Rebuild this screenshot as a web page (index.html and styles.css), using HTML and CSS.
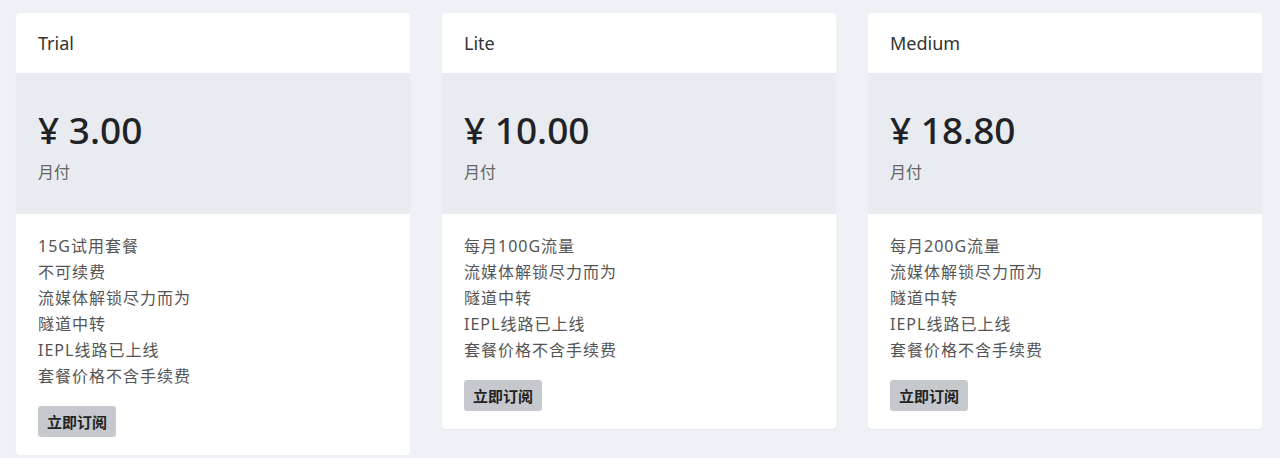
FILE: index.html
```html
<!DOCTYPE html>
<html lang="zh-CN">
<head>
<meta charset="utf-8">
<link rel="stylesheet" href="styles.css">
</head>
<body>
<div class="plans">
  <div class="card">
    <div class="card-head">Trial</div>
    <div class="card-price">
      <div class="price">¥ 3.00</div>
      <div class="period">月付</div>
    </div>
    <div class="card-body">
      <div class="features">
        <div>15G试用套餐</div>
        <div>不可续费</div>
        <div>流媒体解锁尽力而为</div>
        <div>隧道中转</div>
        <div>IEPL线路已上线</div>
        <div>套餐价格不含手续费</div>
      </div>
      <button class="btn">立即订阅</button>
    </div>
  </div>
  <div class="card">
    <div class="card-head">Lite</div>
    <div class="card-price">
      <div class="price">¥ 10.00</div>
      <div class="period">月付</div>
    </div>
    <div class="card-body">
      <div class="features">
        <div>每月100G流量</div>
        <div>流媒体解锁尽力而为</div>
        <div>隧道中转</div>
        <div>IEPL线路已上线</div>
        <div>套餐价格不含手续费</div>
      </div>
      <button class="btn">立即订阅</button>
    </div>
  </div>
  <div class="card">
    <div class="card-head">Medium</div>
    <div class="card-price">
      <div class="price">¥ 18.80</div>
      <div class="period">月付</div>
    </div>
    <div class="card-body">
      <div class="features">
        <div>每月200G流量</div>
        <div>流媒体解锁尽力而为</div>
        <div>隧道中转</div>
        <div>IEPL线路已上线</div>
        <div>套餐价格不含手续费</div>
      </div>
      <button class="btn">立即订阅</button>
    </div>
  </div>
</div>
</body>
</html>
```
FILE: styles.css
```css
html, body {
  margin: 0;
  padding: 0;
  background: #eef1f6;
  font-family: "Noto Sans", "Noto Sans CJK SC", sans-serif;
}
.plans {
  display: grid;
  grid-template-columns: 394px 394px 394px;
  column-gap: 32px;
  align-items: start;
  padding: 13px 18px 0 16px;
}
.card {
  background: #fff;
  border-radius: 4px;
  overflow: hidden;
  box-shadow: 0 1px 2px rgba(0,0,0,0.04);
}
.card-head {
  height: 60px;
  display: flex;
  align-items: center;
  padding: 0 22px;
  font-size: 18px;
  color: #333;
}
.card-price {
  height: 141px;
  box-sizing: border-box;
  background: #e8ebef;
  padding: 32px 22px 0;
}
.price {
  font-size: 37px;
  line-height: 50px;
  color: #1f2226;
  font-weight: 500;
}
.period {
  margin-top: 5px;
  font-size: 16px;
  line-height: 24px;
  color: #666;
}
.card-body {
  padding: 19px 22px 18px;
}
.features {
  font-size: 16px;
  letter-spacing: 1px;
  line-height: 26px;
  color: #555;
}
.btn {
  margin-top: 17px;
  display: block;
  width: 78px;
  height: 31px;
  border: 0;
  border-radius: 3px;
  background: #c5c9ce;
  color: #222;
  font-family: "Noto Sans CJK SC", sans-serif;
  font-size: 15px;
  font-weight: 700;
  padding: 0;
  cursor: pointer;
}
```
